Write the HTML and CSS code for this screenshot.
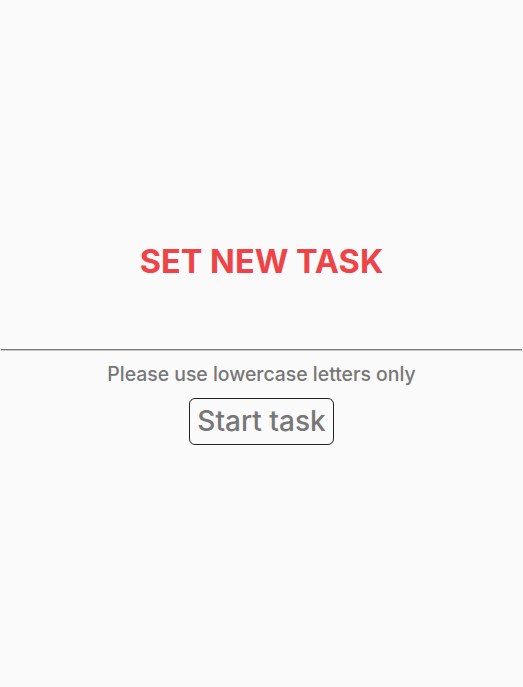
FILE: index.html
```html
<!DOCTYPE html>
<html>
<head>
<meta charset="utf-8">
<link rel="stylesheet" href="styles.css">
</head>
<body>
<main class="page">
  <section class="hero">
    <h1 class="title">SET NEW TASK</h1>
  </section>
  <hr class="divider">
  <section class="form">
    <p class="hint">Please use lowercase letters only</p>
    <button class="start">Start task</button>
  </section>
</main>
</body>
</html>
```
FILE: styles.css
```css
html, body {
  margin: 0;
  padding: 0;
  background: #fafafa;
}
.page {
  width: 523px;
  height: 687px;
  display: flex;
  flex-direction: column;
  font-family: "Inter", "Noto Sans", sans-serif;
}
.hero {
  height: 349px;
  display: flex;
  align-items: flex-start;
  justify-content: center;
}
.title {
  margin: 242px 0 0;
  font-size: 32.5px;
  font-weight: 700;
  color: #ee4448;
  line-height: 40px;
}
.divider {
  margin: 0 1px;
  border: none;
  border-top: 1px solid #7a7a7a;
  border-bottom: 1px solid #c8c8c8;
  height: 0;
}
.form {
  display: flex;
  flex-direction: column;
  align-items: center;
}
.hint {
  margin: 11px 0 0;
  font-size: 19.4px;
  font-weight: 500;
  line-height: 24px;
  color: #777;
}
.start {
  margin-top: 12px;
  font-family: inherit;
  font-size: 28px;
  font-weight: 500;
  color: #777;
  background: #fafafa;
  border: 1.5px solid #222;
  border-radius: 6px;
  padding: 0 7px;
  line-height: 45px;
}
```
